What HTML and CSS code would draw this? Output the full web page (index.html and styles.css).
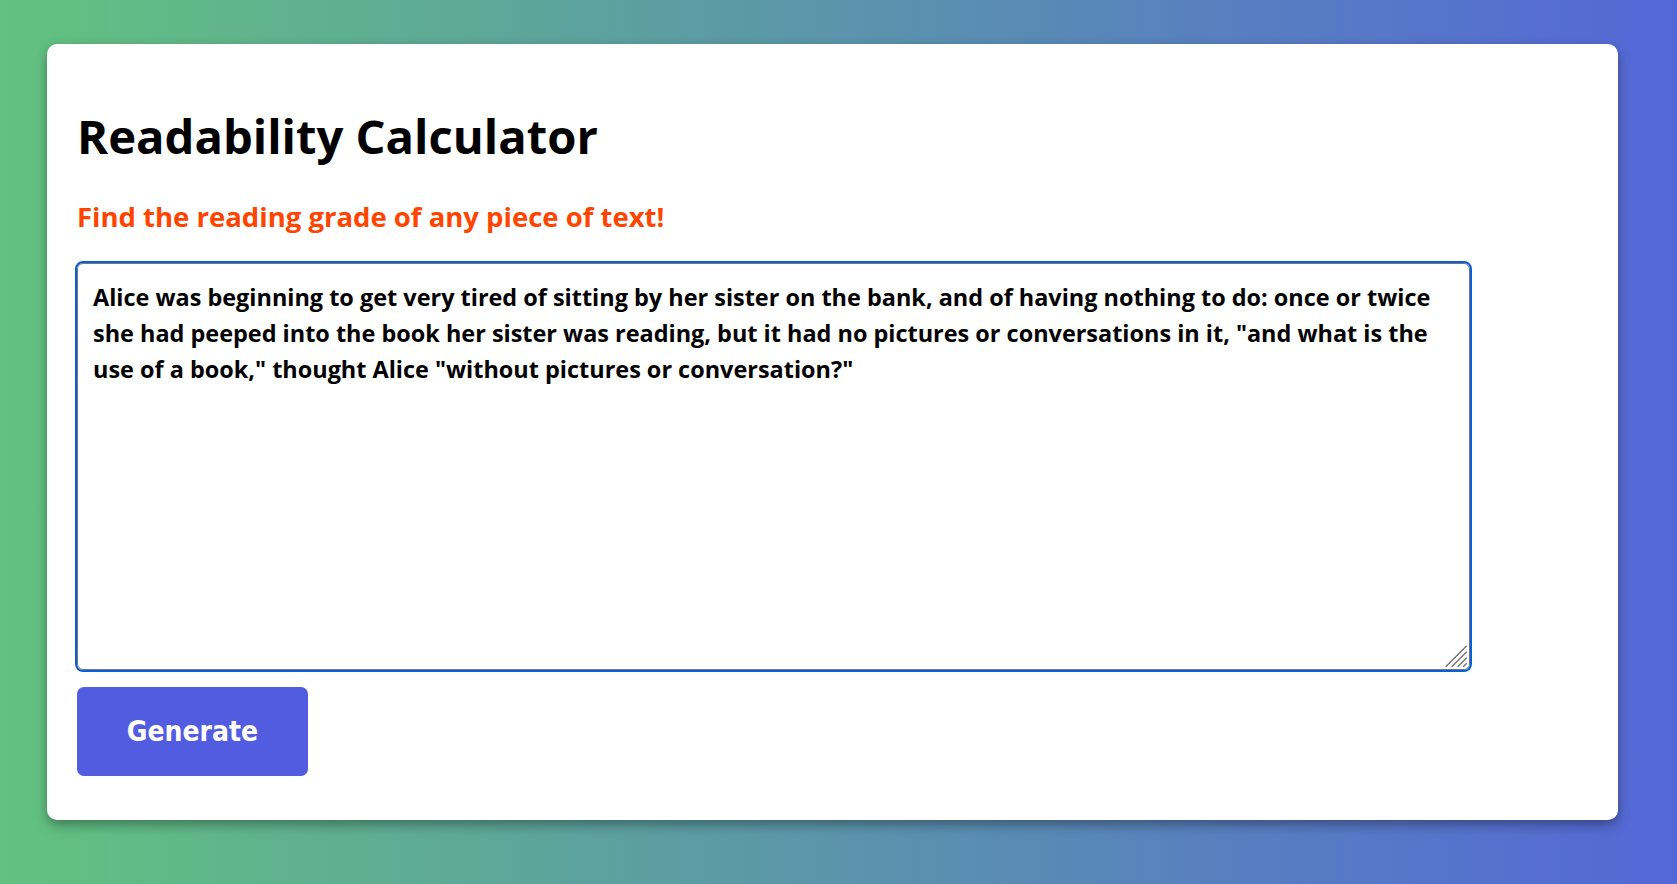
FILE: index.html
```html
<!DOCTYPE html>
<html lang="en">
<head>
<meta charset="utf-8">
<title>Readability Calculator</title>
<link rel="stylesheet" href="styles.css">
</head>
<body>
<main class="card">
  <h1 class="title">Readability Calculator</h1>
  <h2 class="subtitle">Find the reading grade of any piece of text!</h2>
  <div class="field">
    <textarea class="input" spellcheck="false">Alice was beginning to get very tired of sitting by her sister on the bank, and of having nothing to do: once or twice she had peeped into the book her sister was reading, but it had no pictures or conversations in it, "and what is the use of a book," thought Alice "without pictures or conversation?"</textarea>
    <svg class="grip" width="22" height="22" viewBox="0 0 22 22" aria-hidden="true">
      <path d="M0.7 21.7 L21.7 0.7 M6.7 21.7 L21.7 6.7 M12.7 21.7 L21.7 12.7 M18.2 21.7 L21.7 18.2" stroke="#7c7c7c" stroke-width="1.6" fill="none"/>
    </svg>
  </div>
  <button class="btn" type="button">Generate</button>
</main>
</body>
</html>
```
FILE: styles.css
```css
html, body {
  margin: 0;
  height: 100%;
}
body {
  background: linear-gradient(to right, #62c27f 0%, #5467d7 100%);
  padding: 44px 59px 0 47px;
  box-sizing: border-box;
  font-family: "Open Sans", "Noto Sans", sans-serif;
}
.card {
  background: #fff;
  border-radius: 10px;
  box-shadow: 0 5px 12px rgba(0, 0, 0, 0.35);
  height: 776px;
  box-sizing: border-box;
  padding: 62px 30px 0 30px;
  display: flex;
  flex-direction: column;
  align-items: flex-start;
}
.title {
  margin: 0;
  font-size: 47.2px;
  line-height: 60px;
  font-weight: 700;
  color: #000;
}
.subtitle {
  margin: 34px 0 0 0;
  font-size: 27.5px;
  line-height: 34px;
  font-weight: 700;
  color: #ff4500;
}
.field {
  position: relative;
  margin: 29px 0 0 0;
  width: 1393px;
  height: 407px;
}
.input {
  display: block;
  width: 100%;
  height: 100%;
  box-sizing: border-box;
  border: 1px solid #767676;
  outline: 2px solid #0a5fd8;
  border-radius: 6px;
  padding: 15px;
  font-family: inherit;
  font-size: 23.45px;
  line-height: 36px;
  font-weight: 700;
  color: #000;
  resize: none;
}
.grip {
  position: absolute;
  right: 3px;
  bottom: 3px;
  pointer-events: none;
}
.btn {
  margin-top: 17px;
  width: 231px;
  height: 89px;
  border: none;
  border-radius: 7px;
  background: #525ce0;
  color: #fff;
  font-family: "DejaVu Sans Condensed", "DejaVu Sans", Verdana, sans-serif;
  font-stretch: condensed;
  font-weight: 700;
  font-size: 28px;
  cursor: pointer;
}
```
